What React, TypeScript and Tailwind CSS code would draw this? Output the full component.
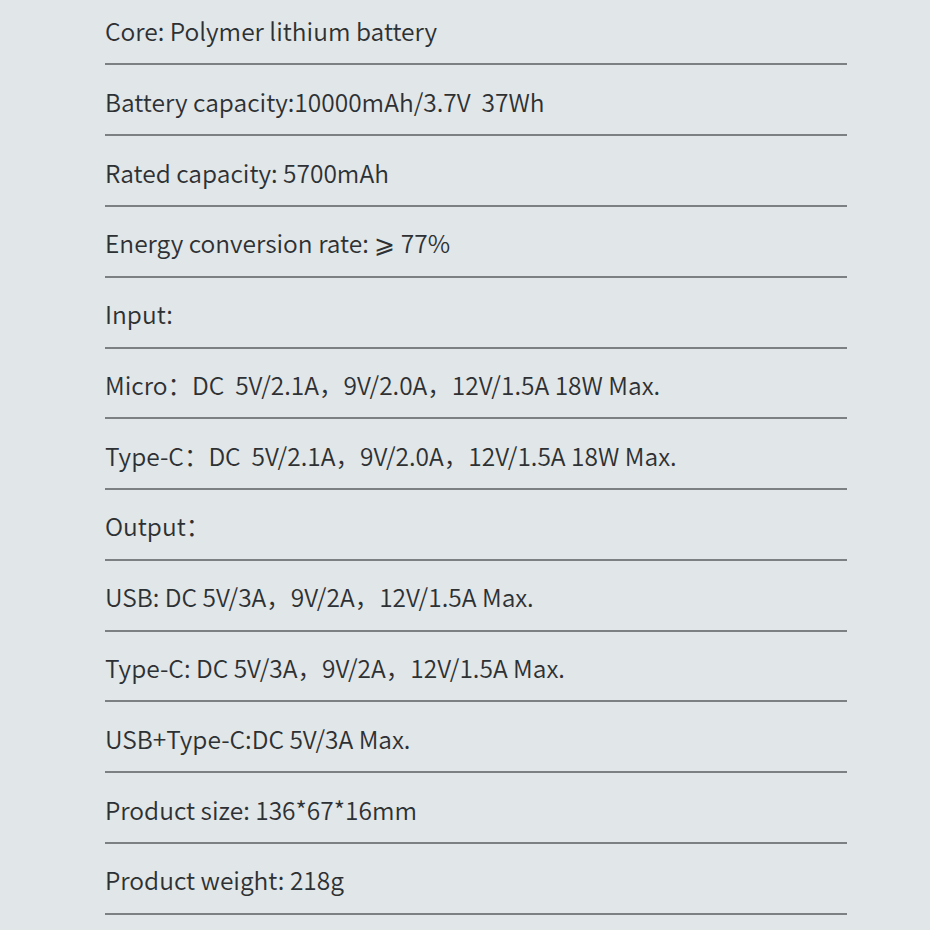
const specs = [
  "Core: Polymer lithium battery",
  "Battery capacity:10000mAh/3.7V  37Wh",
  "Rated capacity: 5700mAh",
  "Energy conversion rate: ⩾ 77%",
  "Input:",
  "Micro：DC  5V/2.1A，9V/2.0A，12V/1.5A 18W Max.",
  "Type-C：DC  5V/2.1A，9V/2.0A，12V/1.5A 18W Max.",
  "Output：",
  "USB: DC 5V/3A，9V/2A，12V/1.5A Max.",
  "Type-C: DC 5V/3A，9V/2A，12V/1.5A Max.",
  "USB+Type-C:DC 5V/3A Max.",
  "Product size: 136*67*16mm",
  "Product weight: 218g",
];

export default function App() {
  return (
    <div className="w-[930px] h-[930px] bg-[#e1e6e9] overflow-hidden pt-[18px]">
      <div
        className="ml-[105px] w-[742px] flex flex-col gap-[23.4px] text-[24.5px] font-[350] text-[#2e3133] whitespace-pre"
        style={{ fontFamily: '"Noto Sans CJK SC", "Noto Sans", sans-serif' }}
      >
        {specs.map((s) => (
          <div key={s} className="h-[47.4px] leading-[26px] border-b-2 border-[#7c8083]">
            {s}
          </div>
        ))}
      </div>
    </div>
  );
}
